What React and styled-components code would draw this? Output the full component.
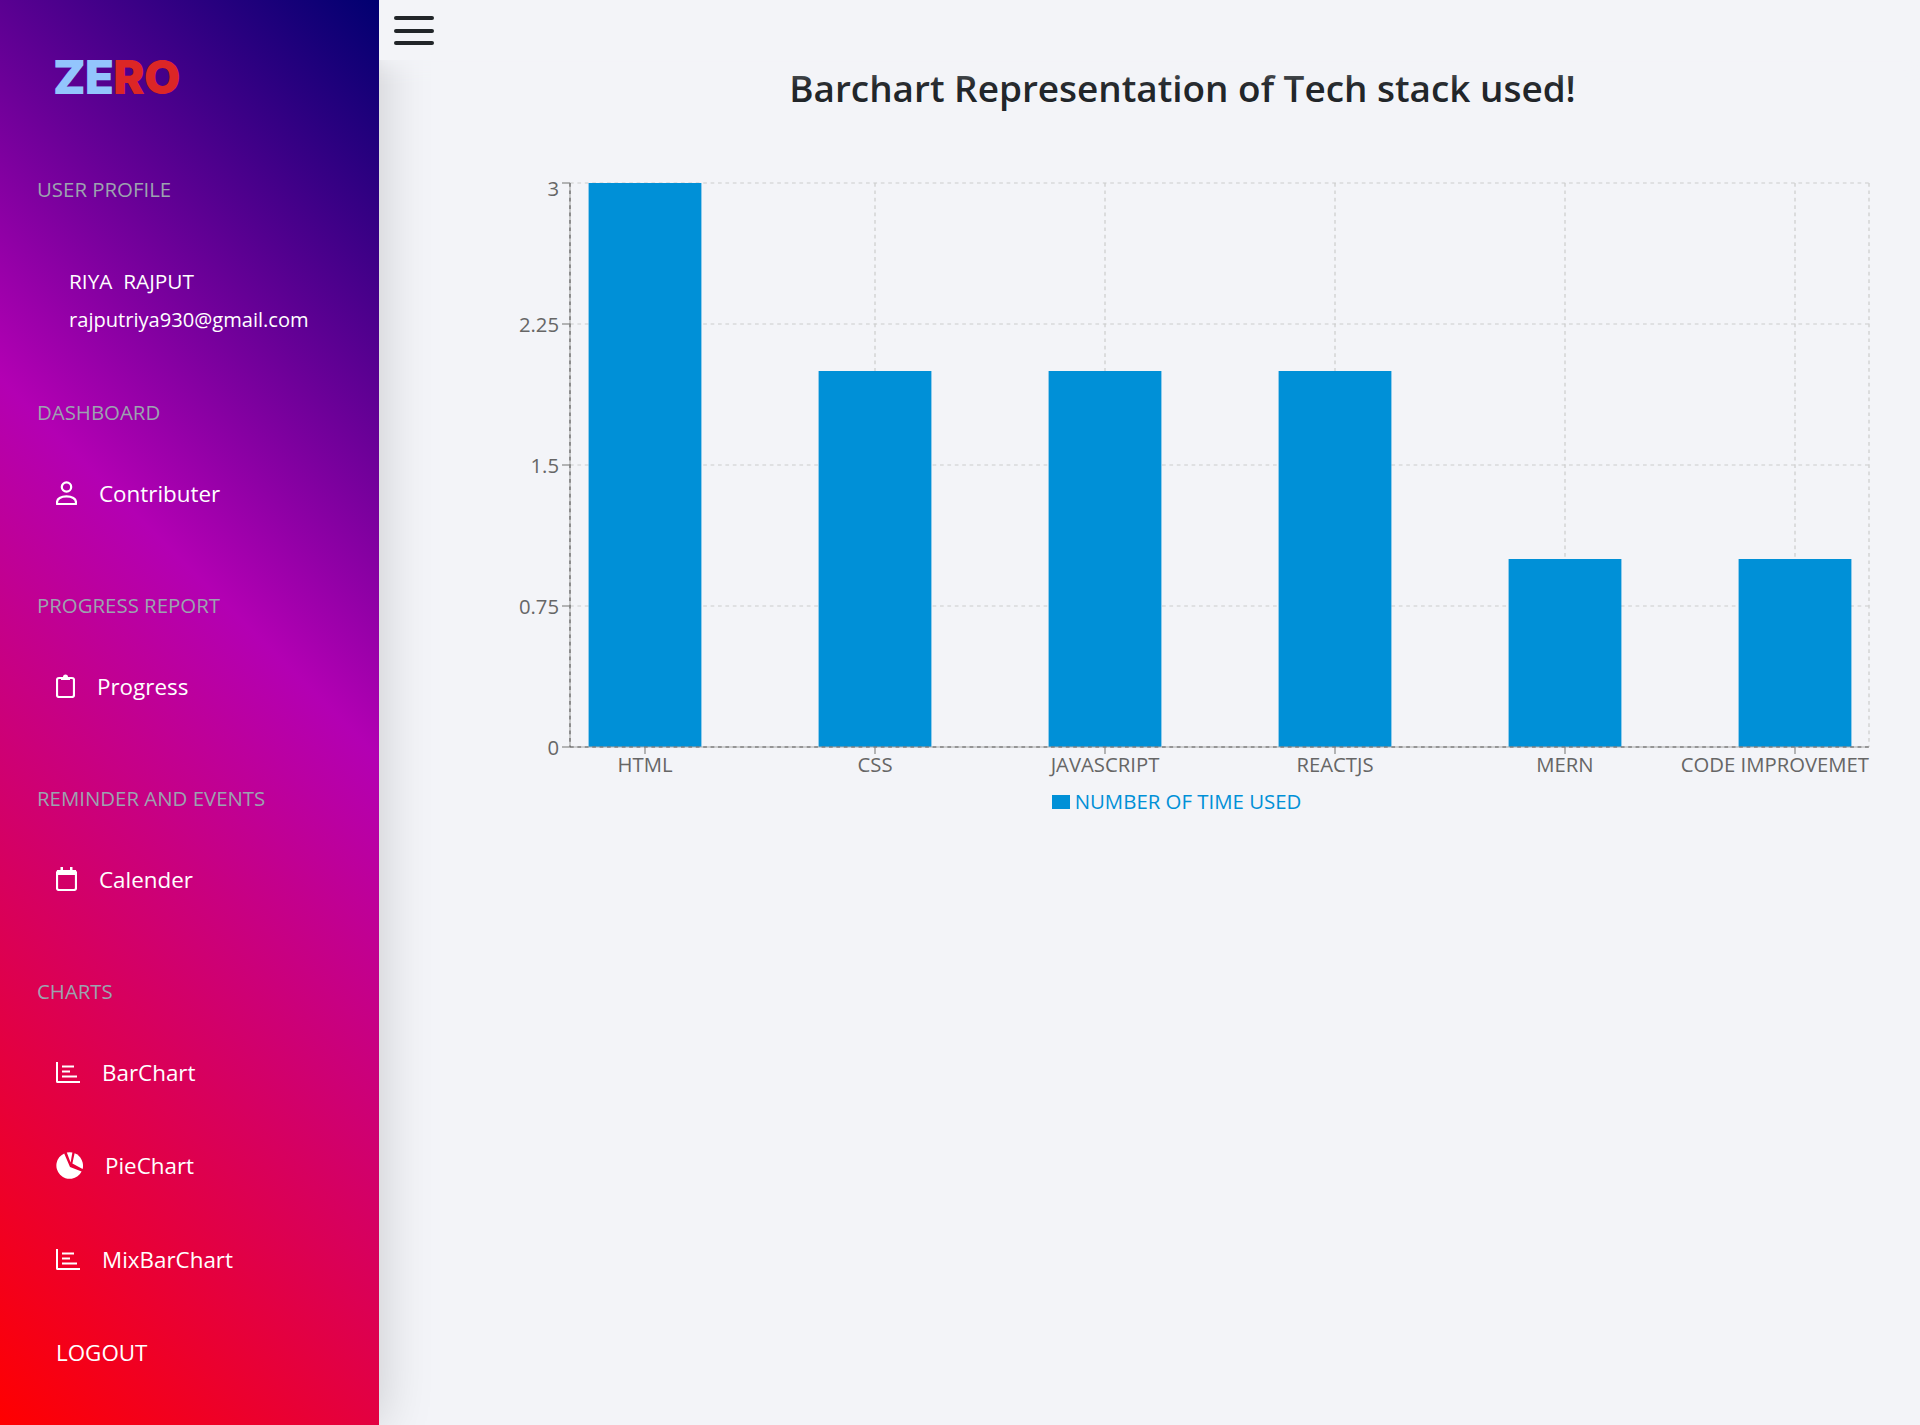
import React from "react";
import styled, { createGlobalStyle } from "styled-components";

const GlobalStyle = createGlobalStyle`
  body {
    margin: 0;
    background: #f3f4f8;
    font-family: "Open Sans", "Noto Sans", sans-serif;
  }
`;

const chartData = [
  { name: "HTML", value: 3 },
  { name: "CSS", value: 2 },
  { name: "JAVASCRIPT", value: 2 },
  { name: "REACTJS", value: 2 },
  { name: "MERN", value: 1 },
  { name: "CODE IMPROVEMET", value: 1 },
];

const yTicks = [
  { label: "3", y: 183, textY: 196 },
  { label: "2.25", y: 324, textY: 332 },
  { label: "1.5", y: 465, textY: 473 },
  { label: "0.75", y: 606, textY: 614 },
  { label: "0", y: 747, textY: 755 },
];

const LEFT = 570;
const RIGHT = 1869;
const TOP = 183;
const BOTTOM = 747;
const barColor = "#0090d7";

const UserIcon = () => (
  <svg width="21" height="24" viewBox="0 0 21 24" fill="none" stroke="#fff" strokeWidth="2.2">
    <circle cx="10.5" cy="6" r="4.7" />
    <path d="M1 23v-1.6c0-3.6 4-6 9.5-6s9.5 2.4 9.5 6V23Z" strokeLinejoin="round" />
  </svg>
);

const ClipboardIcon = () => (
  <svg width="19" height="24" viewBox="0 0 19 24" fill="none" stroke="#fff" strokeWidth="2.2">
    <rect x="1" y="4" width="17" height="19" rx="2" />
    <path d="M5 6V3h2a2.5 2.5 0 0 1 5 0h2v3Z" fill="#fff" stroke="none" />
  </svg>
);

const CalendarIcon = () => (
  <svg width="21" height="24" viewBox="0 0 21 24" fill="none" stroke="#fff" strokeWidth="2.2">
    <rect x="1" y="4" width="19" height="19" rx="2" />
    <path d="M1 3h19v5H1ZM4.5 0H7v4H4.5ZM14 0h2.5v4H14Z" fill="#fff" stroke="none" />
  </svg>
);

const BarsIcon = () => (
  <svg width="24" height="21" viewBox="0 0 24 21" fill="#fff">
    <path d="M0 0h2v19h22v2H1.5A1.5 1.5 0 0 1 0 19.5Z" />
    <rect x="6" y="3.5" width="12" height="2" />
    <rect x="6" y="8.5" width="8" height="2" />
    <rect x="6" y="13.5" width="15" height="2" />
  </svg>
);

const PieIcon = () => (
  <svg width="27" height="27" viewBox="0 0 27 27" fill="#fff">
    <path d="M14 15 25.6 19.4A13.3 13.3 0 1 1 8.2 1.4Z" />
    <path d="M14.6 10.5 10.8.5A13.3 13.3 0 0 1 16.4.4Z" />
    <path d="M16.4 11.5 18.6 1.3A13.3 13.3 0 0 1 26.6 17Z" />
  </svg>
);

const BarChart = () => (
  <ChartSvg viewBox="445 170 1475 615" width="1475" height="615">
    <g stroke="#ccc" strokeWidth="1.2" strokeDasharray="3.7 3.7">
      {yTicks.map((t) => (
        <line key={t.label} x1={LEFT} y1={t.y} x2={RIGHT} y2={t.y} />
      ))}
      {chartData.map((d, i) => (
        <line key={d.name} x1={645 + i * 230} y1={TOP} x2={645 + i * 230} y2={BOTTOM} />
      ))}
      <line x1={RIGHT} y1={TOP} x2={RIGHT} y2={BOTTOM} />
    </g>
    {chartData.map((d, i) => (
      <rect
        key={d.name}
        x={645 + i * 230 - 56.4}
        y={BOTTOM - d.value * 188}
        width="112.8"
        height={d.value * 188}
        fill={barColor}
      />
    ))}
    {/* the axis reads as dark dashes on a lighter line */}
    <g stroke="#aaa" strokeWidth="1.2">
      <line x1={LEFT} y1={TOP} x2={LEFT} y2={BOTTOM} />
      <line x1={LEFT} y1={BOTTOM} x2={RIGHT} y2={BOTTOM} />
    </g>
    <g stroke="#666" strokeWidth="1.2" strokeDasharray="3.7 3.7">
      <line x1={LEFT} y1={TOP} x2={LEFT} y2={BOTTOM} />
      <line x1={LEFT} y1={BOTTOM} x2={RIGHT} y2={BOTTOM} />
    </g>
    <g stroke="#888" strokeWidth="1.2">
      {yTicks.map((t) => (
        <line key={t.label} x1={LEFT - 8} y1={t.y} x2={LEFT} y2={t.y} />
      ))}
      {chartData.map((d, i) => (
        <line key={d.name} x1={645 + i * 230} y1={BOTTOM} x2={645 + i * 230} y2={BOTTOM + 7} />
      ))}
    </g>
    <AxisLabels>
      {yTicks.map((t) => (
        <text key={t.label} x={LEFT - 11} y={t.textY} textAnchor="end">
          {t.label}
        </text>
      ))}
      {chartData.map((d, i) =>
        i === chartData.length - 1 ? (
          <text key={d.name} x={RIGHT} y={772} textAnchor="end">
            {d.name}
          </text>
        ) : (
          <text key={d.name} x={645 + i * 230} y={772} textAnchor="middle">
            {d.name}
          </text>
        )
      )}
    </AxisLabels>
  </ChartSvg>
);

const App = () => {
  return (
    <Page>
      <GlobalStyle />
      <Sidebar>
        <Logo>
          <LogoPart color="#93c5fd">ZE</LogoPart>
          <LogoPart color="#dc2626">RO</LogoPart>
        </Logo>

        <SectionLabel>USER PROFILE</SectionLabel>
        <Profile>
          <ProfileName>RIYA&nbsp; RAJPUT</ProfileName>
          <ProfileEmail>rajputriya930@gmail.com</ProfileEmail>
        </Profile>

        <SectionLabel>DASHBOARD</SectionLabel>
        <NavItem>
          <UserIcon />
          Contributer
        </NavItem>

        <SectionLabel>PROGRESS REPORT</SectionLabel>
        <NavItem>
          <ClipboardIcon />
          Progress
        </NavItem>

        <SectionLabel>REMINDER AND EVENTS</SectionLabel>
        <NavItem>
          <CalendarIcon />
          Calender
        </NavItem>

        <SectionLabel>CHARTS</SectionLabel>
        <NavItem>
          <BarsIcon />
          BarChart
        </NavItem>
        <NavItem $close>
          <PieIcon />
          PieChart
        </NavItem>
        <NavItem $close>
          <BarsIcon />
          MixBarChart
        </NavItem>
        <NavItem $close>LOGOUT</NavItem>
      </Sidebar>

      <Main>
        <Header>
          <MenuButton>
            <MenuLine />
            <MenuLine />
            <MenuLine />
          </MenuButton>
        </Header>
        <Content>
          <Title>Barchart Representation of Tech stack used!</Title>
          <BarChart />
          <Legend>
            <LegendSwatch />
            NUMBER OF TIME USED
          </Legend>
        </Content>
      </Main>
    </Page>
  );
};

export default App;

const Page = styled.div`
  display: flex;
  min-height: 100vh;
`;

const Sidebar = styled.aside`
  position: relative;
  z-index: 1;
  box-sizing: border-box;
  flex: 0 0 379px;
  height: 1425px;
  overflow: hidden;
  padding-left: 37px;
  background: linear-gradient(45deg, #ff0000 0%, #b300b3 58%, #000070 100%);
  box-shadow: 0 0 50px rgba(0, 0, 0, 0.18);
`;

const Logo = styled.div`
  height: 60px;
  margin: 47px 0 67px 16px;
  font-family: Inter, sans-serif;
  font-size: 47px;
  font-weight: 900;
  line-height: 60px;
  letter-spacing: -0.6px;
`;

const LogoPart = styled.span`
  color: ${(props) => props.color};
`;

const SectionLabel = styled.div`
  height: 30px;
  font-size: 20.4px;
  line-height: 30px;
  color: #9ca3af;
`;

const Profile = styled.div`
  margin: 58px 0 58px 32px;
  font-size: 20.1px;
  line-height: 38px;
  color: #fff;
`;

const ProfileName = styled.div`
  font-size: 20.8px;
`;

const ProfileEmail = styled.div`
  margin-top: 1px;
`;

const NavItem = styled.div`
  display: flex;
  align-items: center;
  gap: 22px;
  height: 46px;
  margin: ${(props) => (props.$close ? "47.5px 0 0 19px" : "43px 0 74px 19px")};
  font-size: 22.4px;
  color: #fff;

  &:nth-last-child(-n + 4) {
    margin-bottom: 0;
  }
`;

const Main = styled.main`
  flex: 1;
  min-width: 0;
  background: #f3f4f8;
`;

const Header = styled.header`
  position: relative;
  z-index: 2;
  height: 60px;
  padding-left: 15px;
  background: #f3f4f8;
  box-shadow: 0 0 20px 6px #f3f4f8;
  clip-path: inset(0 0 -40px 0);
`;

const MenuButton = styled.div`
  display: flex;
  flex-direction: column;
  gap: 8.5px;
  width: 40px;
  padding-top: 16px;
`;

const MenuLine = styled.div`
  height: 4px;
  border-radius: 2px;
  background: #212529;
`;

const Content = styled.div`
  padding-left: 66px;
`;

const Title = styled.h1`
  height: 48px;
  margin: 4px 0 58px;
  font-size: 36.9px;
  font-weight: 600;
  line-height: 48px;
  text-align: center;
  color: #212529;
`;

const ChartSvg = styled.svg`
  display: block;
`;

const AxisLabels = styled.g`
  font-size: 20.3px;
  fill: #666;
`;

const Legend = styled.div`
  display: flex;
  justify-content: center;
  align-items: center;
  gap: 5px;
  height: 32px;
  padding-right: 12px;
  font-size: 20.4px;
  color: ${barColor};
`;

const LegendSwatch = styled.span`
  width: 18px;
  height: 14px;
  margin-top: 2px;
  background: ${barColor};
`;
